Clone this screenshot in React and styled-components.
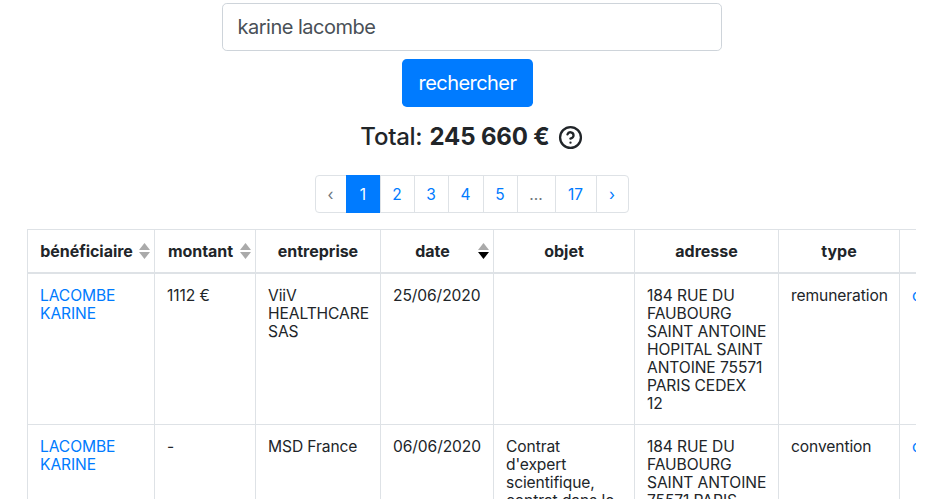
import React from "react";
import styled, { createGlobalStyle } from "styled-components";
import { CircleHelp } from "lucide-react";

const Global = createGlobalStyle`
  html, body { margin: 0; height: 499px; overflow: hidden; background: #fff; }
  body { font-family: Inter, "Liberation Sans", sans-serif; color: #212529; }
`;
const Page = styled.div`
  display: flex; flex-direction: column; align-items: center;
  padding: 3px 0 0 0; width: 943px; box-sizing: border-box;
`;
const SearchInput = styled.input`
  width: 500px; height: 48px; box-sizing: border-box; padding: 0 15px;
  border: 1px solid #ced4da; border-radius: 4.8px; color: #495057;
  font: 400 20px Inter, "Liberation Sans", sans-serif; letter-spacing: -.5px; outline: none;
`;
const SearchButton = styled.button`
  margin: 8px 8px 0 0; width: 131px; height: 48px; border: 0; border-radius: 4.8px;
  background: #007bff; color: #fff;
  font: 400 20px Inter, "Liberation Sans", sans-serif; letter-spacing: -.55px;
`;
const Total = styled.div`
  display: flex; align-items: center; gap: 8px; margin-top: 15px; height: 30px;
  font-size: 24px; line-height: 30px; letter-spacing: -.25px; font-weight: 500;
  b { font-weight: 700; margin-left: 1px; letter-spacing: -.15px; }
`;
const Pagination = styled.ul`
  display: flex; list-style: none; margin: 23px 0 0; padding: 0; height: 38px;
`;
const PageItem = styled.li`
  box-sizing: border-box; width: ${p => p.$w}px; height: 38px; margin-left: -1px;
  display: flex; align-items: center; justify-content: center;
  font-size: 15.5px; border: 1px solid #dee2e6;
  color: ${p => p.$active ? "#fff" : p.$muted ? "#6c757d" : "#007bff"};
  background: ${p => p.$active ? "#007bff" : "#fff"};
  border-color: ${p => p.$active ? "#007bff" : "#dee2e6"};
  &:first-child { border-radius: 4px 0 0 4px; margin-left: 0; }
  &:last-child { border-radius: 0 4px 4px 0; }
`;
const TableClip = styled.div`
  align-self: flex-start; margin: 16px 0 0 27px; width: 889px; overflow: hidden;
`;
const Table = styled.table`
  table-layout: fixed; border-collapse: collapse; width: 1000px;
  font-size: 15.6px; line-height: 18px; letter-spacing: -.1px;
`;
const Th = styled.th`
  position: relative; height: 43px; box-sizing: border-box;
  padding: 1px ${p => p.$sort ? 21 : 12}px 0 12px; text-align: center;
  font-size: 16px; letter-spacing: -.03px; font-weight: 700;
  border: 1px solid #dee2e6; border-bottom: 2px solid #dee2e6;
  white-space: nowrap;
`;
const Td = styled.td`
  padding: 13px 9px 11px 12px; vertical-align: top;
  border: 1px solid #dee2e6; white-space: pre-line;
`;
const LinkText = styled.a`
  color: #007bff; text-decoration: none;
`;
const SortMark = styled.svg`
  position: absolute; right: 4px; top: 13px; width: 11px; height: 17px;
`;

const Sort = ({ active }) => (
  <SortMark viewBox="0 0 11 17">
    <path d="M5.5 0 L11 7 H0 Z" fill="#aaa" />
    <path d="M5.5 16 L11 9 H0 Z" fill={active ? "#000" : "#aaa"} />
  </SortMark>
);

const widths = [127, 101, 125, 113, 141, 144, 121, 128];
const pages = [
  { t: "‹", w: 32, muted: true }, { t: "1", w: 35, active: true }, { t: "2", w: 35 }, { t: "3", w: 35 },
  { t: "4", w: 36 }, { t: "5", w: 35 }, { t: "...", w: 39, muted: true }, { t: "17", w: 42 }, { t: "›", w: 33 },
];
const rows = [
  ["LACOMBE KARINE", "1112 €", "ViiV HEALTHCARE SAS", "25/06/2020", "",
    "184 RUE DU\nFAUBOURG\nSAINT ANTOINE\nHOPITAL SAINT\nANTOINE 75571\nPARIS CEDEX\n12", "remuneration"],
  ["LACOMBE KARINE", "-", "MSD France", "06/06/2020", "Contrat\nd'expert\nscientifique,\ncontrat dans le\ncadre",
    "184 RUE DU\nFAUBOURG\nSAINT ANTOINE\n75571 PARIS\nCEDEX 12", "convention"],
];

export default function App() {
  return (
    <Page>
      <Global />
      <SearchInput defaultValue="karine lacombe" />
      <SearchButton>rechercher</SearchButton>
      <Total>
        <span>Total: <b>245 660 €</b></span>
        <CircleHelp size={25} strokeWidth={2.2} />
      </Total>
      <Pagination>
        {pages.map((p, i) => (
          <PageItem key={i} $w={p.w} $active={p.active} $muted={p.muted}>{p.t}</PageItem>
        ))}
      </Pagination>
      <TableClip>
        <Table>
          <colgroup>
            {widths.map((w, i) => <col key={i} style={{ width: w }} />)}
          </colgroup>
          <thead>
            <tr>
              <Th $sort>bénéficiaire<Sort /></Th>
              <Th $sort>montant<Sort /></Th>
              <Th>entreprise</Th>
              <Th $sort>date<Sort active /></Th>
              <Th>objet</Th>
              <Th>adresse</Th>
              <Th>type</Th>
              <Th>lien</Th>
            </tr>
          </thead>
          <tbody>
            {rows.map((r, i) => (
              <tr key={i}>
                <Td><LinkText href="#">{r[0]}</LinkText></Td>
                {r.slice(1).map((c, j) => <Td key={j}>{c}</Td>)}
                <Td><LinkText href="#">consulter</LinkText></Td>
              </tr>
            ))}
          </tbody>
        </Table>
      </TableClip>
    </Page>
  );
}
